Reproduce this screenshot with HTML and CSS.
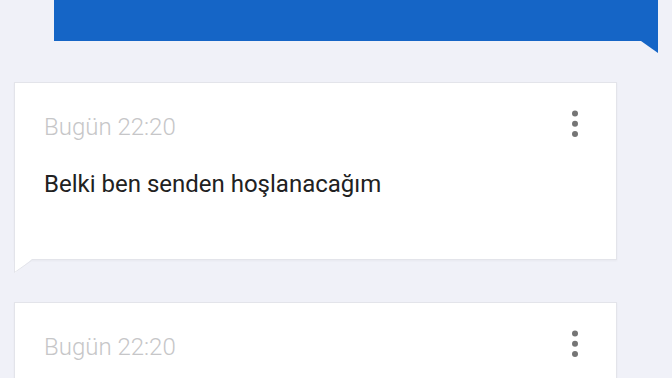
FILE: index.html
```html
<!DOCTYPE html>
<html lang="tr">
<head>
<meta charset="UTF-8" />
<meta name="viewport" content="width=device-width, initial-scale=1" />
<title>Mesajlar</title>
<link rel="stylesheet" href="styles.css">
</head>
<body>

<div class="thread">
  <div class="bubble sent">
    <svg class="tail-sent" width="17" height="12" viewBox="0 0 17 12"><polygon points="0,0 17,0 17,12" /></svg>
  </div>

  <div class="bubble received">
    <div class="msg-head">
      <span class="msg-time">Bugün 22:20</span>
      <svg class="kebab" width="8" height="30" viewBox="0 0 8 30">
        <circle cx="4" cy="3.5" r="3" />
        <circle cx="4" cy="13.8" r="3" />
        <circle cx="4" cy="24" r="3" />
      </svg>
    </div>
    <p class="msg-text">Belki ben senden hoşlanacağım</p>
    <svg class="tail-received" width="18" height="14" viewBox="0 0 18 14">
      <path class="tail-fill" d="M0,0 H18 L1,14 V0Z" />
      <path class="tail-line" d="M0.5,0 V13.5 L17.5,1.5" />
    </svg>
  </div>

  <div class="bubble received last">
    <div class="msg-head">
      <span class="msg-time">Bugün 22:20</span>
      <svg class="kebab" width="8" height="30" viewBox="0 0 8 30">
        <circle cx="4" cy="3.5" r="3" />
        <circle cx="4" cy="13.8" r="3" />
        <circle cx="4" cy="24" r="3" />
      </svg>
    </div>
  </div>
</div>

</body>
</html>
```

FILE: styles.css
```css
body {
  margin: 0;
  height: 378px;
  overflow: hidden;
  background: #f0f1f8;
  font-family: Roboto, 'Noto Sans', sans-serif;
}
.thread {
  display: flex;
  flex-direction: column;
}
.bubble {
  position: relative;
  box-sizing: border-box;
}
.sent {
  height: 41px;
  margin: 0 14px 0 54px;
  background: #1565c6;
}
.tail-sent {
  position: absolute;
  top: 100%;
  right: 0;
  display: block;
}
.tail-sent polygon {
  fill: #1565c6;
}
.received {
  width: 603px;
  margin: 41px 0 0 14px;
  padding: 30px 37px 61px 29px;
  background: #fff;
  border: 1px solid #e3e4ea;
  box-shadow: 0 1px 2px rgba(0, 0, 0, 0.04);
}
.received.last {
  margin-top: 42px;
  min-height: 178px;
}
.msg-head {
  display: flex;
  justify-content: space-between;
  align-items: flex-start;
  height: 28px;
}
.msg-time {
  font-size: 24px;
  font-weight: 300;
  line-height: 28px;
  color: #c6c6c8;
}
.kebab {
  display: block;
  margin-top: -3px;
}
.kebab circle {
  fill: #757575;
}
.msg-text {
  margin: 29px 0 0;
  font-size: 24px;
  line-height: 28px;
  color: #212121;
}
.tail-received {
  position: absolute;
  top: 100%;
  left: -1px;
  display: block;
}
.tail-fill {
  fill: #fff;
}
.tail-line {
  fill: none;
  stroke: #e3e4ea;
  stroke-width: 1;
}
```
